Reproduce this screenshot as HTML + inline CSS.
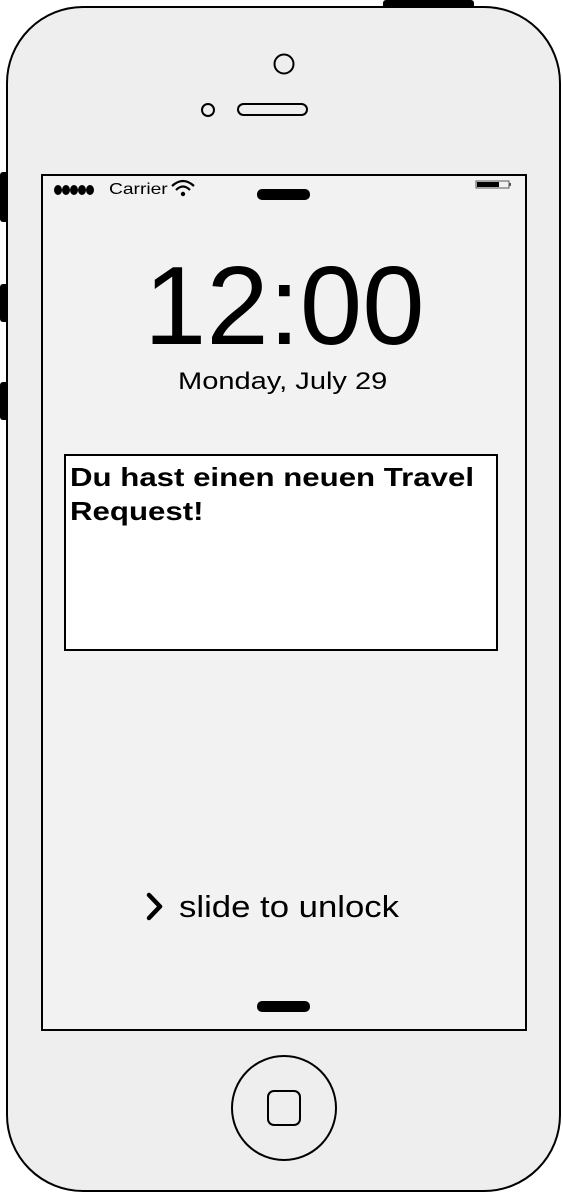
<!DOCTYPE html>
<html><head><meta charset="utf-8"><style>
html,body{margin:0;padding:0;width:563px;height:1193px;overflow:hidden;background:#fff;font-family:"Liberation Sans",sans-serif;}
.a{position:absolute;white-space:nowrap;color:#000;transform-origin:0 0;}
</style></head><body>
<svg width="563" height="1193" style="position:absolute;left:0;top:0">
<rect x="383" y="0" width="91" height="12" rx="3" fill="#000"/>
<rect x="0" y="172" width="10" height="50" rx="3" fill="#000"/>
<rect x="0" y="284" width="10" height="38" rx="3" fill="#000"/>
<rect x="0" y="382" width="10" height="38" rx="3" fill="#000"/>
<rect x="7" y="7" width="553" height="1184" rx="76" fill="#eeeeee" stroke="#000" stroke-width="2"/>
<circle cx="284" cy="64" r="9.5" fill="none" stroke="#000" stroke-width="2"/>
<circle cx="208" cy="110" r="6" fill="none" stroke="#000" stroke-width="2"/>
<rect x="238" y="104" width="69" height="11" rx="5.5" fill="none" stroke="#000" stroke-width="2"/>
<rect x="42" y="175" width="484" height="855" fill="#f2f2f2" stroke="#000" stroke-width="2"/>
<rect x="257" y="189" width="53" height="11" rx="5" fill="#000"/>
<rect x="257" y="1001" width="53" height="11" rx="5" fill="#000"/>
<g fill="#000"><ellipse cx="58" cy="190" rx="4" ry="5"/><ellipse cx="66" cy="190" rx="4" ry="5"/><ellipse cx="74" cy="190" rx="4" ry="5"/><ellipse cx="82" cy="190" rx="4" ry="5"/><ellipse cx="90" cy="190" rx="4" ry="5"/></g>
<g fill="none" stroke="#000" stroke-width="2.2"><path d="M172 186 Q183 176 194 186"/><path d="M176 190 Q183 183 190 190"/></g>
<circle cx="183" cy="194" r="2.2" fill="#000"/>
<rect x="476" y="181" width="33" height="7" fill="none" stroke="#555" stroke-width="1"/>
<rect x="477" y="182" width="22" height="5" fill="#000"/>
<rect x="509" y="183" width="2" height="3" fill="#555"/>
<rect x="65" y="455" width="432" height="195" fill="#fff" stroke="#000" stroke-width="2"/>
<path d="M149 895 L160 906.5 L149 918" fill="none" stroke="#000" stroke-width="4.5" stroke-linejoin="round" stroke-linecap="round"/>
<circle cx="284" cy="1108" r="52" fill="none" stroke="#000" stroke-width="2"/>
<rect x="268" y="1091" width="32" height="34" rx="6" fill="none" stroke="#000" stroke-width="2"/>
</svg>
<div class="a" style="left:109px;top:181px;font-size:16px;transform:scaleX(1.2);">Carrier</div>
<div class="a" style="left:144px;top:243px;font-size:111px;line-height:126px;transform:scaleX(1.01);">12:00</div>
<div class="a" style="left:178px;top:368px;font-size:24px;line-height:28px;transform:scaleX(1.21);">Monday, July 29</div>
<div class="a" style="left:70px;top:460px;font-size:26px;line-height:34px;font-weight:bold;transform:scaleX(1.2);">Du hast einen neuen Travel<br>Request!</div>
<div class="a" style="left:179px;top:889px;font-size:31px;line-height:36px;transform:scaleX(1.12);">slide to unlock</div>
</body></html>
